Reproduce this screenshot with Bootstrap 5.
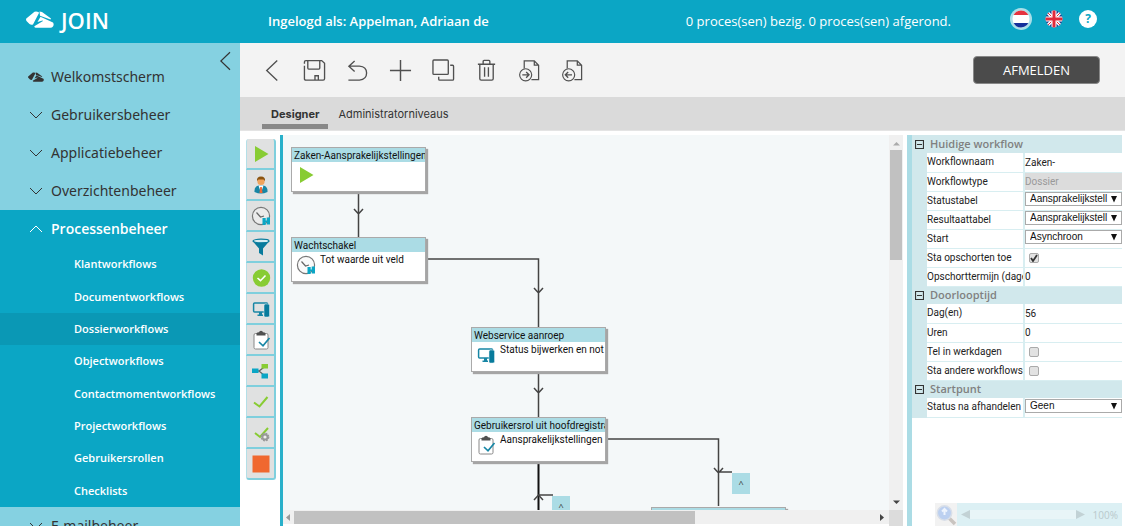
<!DOCTYPE html>
<html lang="nl">
<head>
<meta charset="utf-8">
<meta name="viewport" content="width=device-width, initial-scale=1">
<title>JOIN - Dossierworkflows</title>
<link href="https://cdn.jsdelivr.net/npm/bootstrap@5.3.0/dist/css/bootstrap.min.css" rel="stylesheet">
<style>
  :root { --teal:#0ba6c5; --pale:#85d1e1; --node:#abdce5; --soft:#d1e8ec; }
  body { font-family:"Open Sans","Noto Sans",sans-serif; font-size:13px; line-height:20px; color:#333; background:#fff; }
  a { text-decoration:none; color:inherit; }
  button { border:0; background:none; padding:0; color:inherit; }
  svg { display:block; }
  .topbar { height:43px; background:var(--teal); color:#fff; padding-bottom:2px; }
  .topbar .user { font-weight:600; }
  .brand-area { width:240px; padding-left:26px; padding-bottom:2px; gap:7px; }
  .brand-area span { font-weight:600; font-size:22px; line-height:24px; }
  .side { width:240px; background:var(--pale); padding-top:15px; }
  .collapse-btn { position:absolute; right:5px; top:8px; }
  .side-item { height:38px; padding-left:28px; gap:7px; font-family:"Noto Sans",sans-serif; font-size:14px; color:#333; }
  .side-item svg { width:16px; height:16px; }
  .side-open { background:var(--teal); color:#fff; font-weight:600; font-family:"Open Sans",sans-serif; }
  .side-sub { background:var(--teal); color:#fff; height:259px; font-size:11px; font-weight:600; }
  .side-sub a { padding-left:74px; }
  .side-sub a.current { background:#0a98b5; }
  .tools { height:54px; background:#f3f3f3; padding:0 25px 0 10px; color:#505050; }
  .tools .tool { width:43px; height:43px; }
  .tools .tool svg { width:23px; height:23px; }
  .logout { width:127px; height:28px; background:#4b4b4b; color:#fff; border:1px solid #888; border-radius:4px; font-weight:500; font-size:13px; }
  .tabs { height:34px; background:#dadada; padding-left:22px; font-family:Inter,sans-serif; font-size:11px; font-weight:500; border-bottom:1px solid #e4e4e4; }
  .tabs button { padding:6px 10px 0; border-bottom:5px solid transparent; margin-bottom:1px; }
  .tabs button.on { font-weight:700; border-color:#888; padding:6px 9px 0; }
  .work { padding-top:4px; }
  .palette { width:30px; margin:4px 4px 0 6px; }
  .palette button { height:31px; background:#e0e1e1; border-style:solid; border-width:0 2px 2px 1px; border-color:#b4dfe7 #7fcfdd #7fcfdd #b4dfe7; }
  .palette button:first-child { border-radius:3px 3px 0 0; }
  .palette button:last-child { border-radius:0 0 3px 3px; }
  .flow { border-left:3px solid #29b0ca; }
  .canvas { background:#f4f8f9; overflow:hidden; }
  .node { position:absolute; width:135px; height:45px; background:#fff; border:1px solid #aaa; box-shadow:2px 2px 1px #a5a5a5; overflow:hidden; white-space:nowrap; font-family:Roboto,sans-serif; font-size:10px; color:#111; }
  .node-title { background:var(--node); height:14px; line-height:16px; padding-left:2px; }
  .node-text { line-height:16px; padding-left:4px; }
  .node-icon { margin:3px 0 0 4px; }
  .fold { position:absolute; width:18px; background:var(--node); font-size:9px; line-height:21px; text-align:center; }
  .vbar { width:14px; background:#f0f0f0; padding:6px 0 5px; }
  .vbar i { width:12px; height:110px; background:#c1c1c1; margin-top:4px; }
  .hbar { height:14px; background:#f0f0f0; padding:0 5px 0 3px; margin-bottom:2px; }
  .hbar i { width:67%; height:13px; background:#c1c1c1; margin-left:4px; }
  .corner { width:14px; background:#dcdcdc; }
  .props { width:215px; margin:0 3px 0 4px; border-left:5px solid var(--node); }
  .prop-grid { table-layout:fixed; width:100%; border-collapse:collapse; background:var(--soft); font-family:Roboto,sans-serif; font-size:10px; line-height:16px; color:#222; }
  .prop-grid td, .prop-grid th { padding:0; overflow:hidden; white-space:nowrap; }
  .prop-grid th.group { height:18px; color:#808080; font-family:"Open Sans",sans-serif; font-size:11px; font-weight:600; }
  .prop-grid th.group svg { margin:0 6px 0 3px; }
  .prop-grid th.key { font-weight:400; background:#fff; border-right:2px solid #d8eef1; border-bottom:1px solid #d8eef1; height:19px; }
  .prop-grid td.val { background:#fff; border-bottom:1px solid #d8eef1; }
  .prop-grid input[type=text] { display:block; width:100%; height:17px; border:0; padding:0; background:transparent; color:#222; font-size:10px; }
  .prop-grid input[type=text]:disabled { background:#dcdcdc; color:#999; }
  .pick { position:relative; margin-bottom:3px; }
  .pick select { display:block; width:100%; height:14px; border:1px solid #aaa; border-radius:0; background:#fff; appearance:none; font-family:"Liberation Sans",sans-serif; font-size:10px; line-height:12px; padding:0 12px 0 4px; color:#111; }
  .pick svg { position:absolute; right:4px; top:3px; pointer-events:none; }
  .prop-grid input[type=checkbox] { display:block; appearance:none; width:10px; height:10px; margin-left:4px; border:1px solid #aaa; border-radius:2px; background:#e2e2e2; }
  .prop-grid input[type=checkbox]:checked { background:#e2e2e2 url("data:image/svg+xml,%3Csvg xmlns='http://www.w3.org/2000/svg' viewBox='0 0 8 8'%3E%3Cpath d='M1 4l2 3 4-6' fill='none' stroke='%23333' stroke-width='1.8'/%3E%3C/svg%3E"); }
  .zoombar { height:23px; width:187px; background:#dcf0f4; color:#b9c9cc; font-size:10px; }
  .zoombar .glass { width:22px; background:#f2f2f2; }
  .zoombar .track { height:9px; background:#e8f5f7; }
</style>
</head>
<body>
<svg width="0" height="0" class="position-absolute" aria-hidden="true">
  <defs>
    <symbol id="logo" viewBox="0 0 28 17"><path d="M.300 7.500 8.500.800Q10 0 12.500 1L13 2 7 13.500Q5 14.200 3.500 13L.500 10Q-.300 8.500.300 7.500ZM13.500.500 16 1 25 7.500 24.500 8.500 14 4.800ZM14.500 5.800 16 6.500 27 11.500Q28.300 13.500 27 15.500 26 16.800 24.500 16.800H9.500Q8.300 16.500 8.300 15.200L17 10 16.500 9.500 11.500 11Z" fill="currentColor"/></symbol>
    <symbol id="down" viewBox="0 0 16 16"><path d="M2 5 8 11 14 5" fill="none" stroke="currentColor"/></symbol>
    <symbol id="up" viewBox="0 0 16 16"><path d="M2 11 8 5 14 11" fill="none" stroke="currentColor"/></symbol>
    <symbol id="left" viewBox="0 0 24 24"><path d="M18 1.500 7 12 18 22.500" fill="none" stroke="currentColor" stroke-width="1.400"/></symbol>
    <symbol id="play" viewBox="0 0 20 20"><path d="M4 2 17.500 10 4 18Z" fill="#8c3"/></symbol>
    <symbol id="clock" viewBox="0 0 20 20"><circle cx="10" cy="10" r="8.600" fill="#f6f6f6" fill-opacity=".5" stroke="#777" stroke-width="1.200"/><path d="M5.500 6.500 9.500 11 13 10" fill="none" stroke="#666" stroke-width="1.200"/><path d="M11.500 12h3.200v7h-3.200zM15.700 11.500H19v7h-3.300zM14 14.500h4V16h-4z" fill="#0ba6c5"/></symbol>
    <symbol id="pc" viewBox="0 0 20 20"><rect x="2.600" y="4" width="14" height="9" rx="1" fill="none" stroke="#1786a5" stroke-width="1.500"/><path d="M8 13h3v3H8zM6.500 15.500h5.500V17H6.500z" fill="#1786a5"/><rect x="13" y="5" width="5.500" height="13" rx="1.500" fill="#087b9c" stroke="#e0f0f4" stroke-width=".5"/></symbol>
    <symbol id="clip" viewBox="0 0 20 20"><rect x="3" y="3.500" width="14" height="15.500" rx="1.500" fill="#fff" stroke="#888"/><path d="M5.500 5.500V3.500Q6 2.300 8 2.300 8.300.700 10 .700T12 2.300Q14 2.300 14.500 3.500V5.500Z" fill="#505050"/><path d="M8 12 12 15.800 18.500 8" fill="none" stroke="#1786a5" stroke-width="1.700"/></symbol>
    <symbol id="tri" viewBox="0 0 8 8"><path d="M1 1H7L4 7.500Z" fill="#111"/></symbol>
    <symbol id="minus" viewBox="0 0 9 9"><path d="M.500.500h8v8h-8zM2 4.500h5" fill="none" stroke="#333" stroke-width="1.200"/></symbol>
    <symbol id="page" viewBox="0 0 24 24"><path d="M6.500 10V2H17L21.500 6.500V21.500H14M17 2V6.500H21.500" fill="none" stroke="currentColor" stroke-width="1.300"/><circle cx="8" cy="16.500" r="6.300" fill="#f3f3f3" stroke="currentColor" stroke-width="1.200"/></symbol>
  </defs>
</svg>
<div class="vh-100 d-flex flex-column overflow-hidden">
  <header class="topbar d-flex align-items-center flex-shrink-0">
    <a href="#" class="brand-area d-flex align-items-center"><svg width="28" height="17"><use href="#logo"/></svg><span>JOIN</span></a>
    <div class="user ps-4 ms-1">Ingelogd als: Appelman, Adriaan de</div>
    <div class="ms-auto">0 proces(sen) bezig. 0 proces(sen) afgerond.</div>
    <div class="d-flex align-items-center pb-1" style="padding-left:58px;padding-right:28px">
      <button aria-label="Nederlands"><svg width="24" height="24" viewBox="0 0 24 24"><clipPath id="nl"><circle cx="12" cy="12" r="8.500"/></clipPath><circle cx="12" cy="12" r="11" fill="#a9dfe9"/><g clip-path="url(#nl)"><path fill="#fff" d="M0 0h24v24H0z"/><path fill="#e53440" d="M0 0h24v8H0z"/><path fill="#14309a" d="M0 16h24v8H0z"/></g></svg></button>
      <button class="ms-2 ps-1" aria-label="English"><svg width="18" height="18" viewBox="0 0 18 18"><clipPath id="uk"><circle cx="9" cy="9" r="8.500"/></clipPath><g clip-path="url(#uk)"><path fill="#23408f" d="M0 0h18v18H0z"/><path d="M0 0 18 18M18 0 0 18" stroke="#fff" stroke-width="3.200"/><path d="M0 0 18 18M18 0 0 18" stroke="#e02a3a" stroke-width="1"/><path d="M9 0V18M0 9H18" stroke="#fff" stroke-width="5"/><path d="M9 0V18M0 9H18" stroke="#e02a3a" stroke-width="3"/></g></svg></button>
      <button class="ms-3 rounded-circle bg-white d-flex align-items-center justify-content-center" style="width:18px;height:18px;color:#0ba6c5;font-size:12px;font-weight:700" aria-label="Help">?</button>
    </div>
  </header>
  <div class="d-flex flex-fill" style="min-height:0">
    <nav class="side position-relative flex-shrink-0 overflow-hidden">
      <button class="collapse-btn" aria-label="Menu inklappen"><svg width="20" height="20"><use href="#left"/></svg></button>
      <a href="#" class="side-item d-flex align-items-center"><svg><use href="#logo"/></svg>Welkomstscherm</a>
      <a href="#" class="side-item d-flex align-items-center"><svg><use href="#down"/></svg>Gebruikersbeheer</a>
      <a href="#" class="side-item d-flex align-items-center"><svg><use href="#down"/></svg>Applicatiebeheer</a>
      <a href="#" class="side-item d-flex align-items-center"><svg><use href="#down"/></svg>Overzichtenbeheer</a>
      <a href="#" class="side-item side-open d-flex align-items-center"><svg><use href="#up"/></svg>Processenbeheer</a>
      <div class="side-sub d-flex flex-column">
        <a href="#" class="flex-fill d-flex align-items-center">Klantworkflows</a>
        <a href="#" class="flex-fill d-flex align-items-center">Documentworkflows</a>
        <a href="#" class="flex-fill d-flex align-items-center current">Dossierworkflows</a>
        <a href="#" class="flex-fill d-flex align-items-center">Objectworkflows</a>
        <a href="#" class="flex-fill d-flex align-items-center">Contactmomentworkflows</a>
        <a href="#" class="flex-fill d-flex align-items-center">Projectworkflows</a>
        <a href="#" class="flex-fill d-flex align-items-center">Gebruikersrollen</a>
        <a href="#" class="flex-fill d-flex align-items-center">Checklists</a>
      </div>
      <a href="#" class="side-item d-flex align-items-center"><svg><use href="#down"/></svg>E-mailbeheer</a>
    </nav>
    <main class="flex-fill d-flex flex-column" style="min-width:0">
      <div class="tools d-flex align-items-center flex-shrink-0">
        <button class="tool d-flex align-items-center justify-content-center" aria-label="Terug"><svg><use href="#left"/></svg></button>
        <button class="tool d-flex align-items-center justify-content-center" aria-label="Opslaan"><svg viewBox="0 0 24 24" fill="none" stroke="currentColor" stroke-width="1.400"><path d="M1.500 5V3Q1.500 1.700 3 1.700H19.500L22.500 4.500V20.500Q22.500 22 21 22H3Q1.500 22 1.500 20.500V7M5 2V9.500Q5 10.500 6 10.500H16.500Q17.500 10.500 17.500 9.500V2M12.500 22V17.500H16V22"/></svg></button>
        <button class="tool d-flex align-items-center justify-content-center" aria-label="Ongedaan maken"><svg viewBox="0 0 24 24" fill="none" stroke="currentColor" stroke-width="1.400"><path d="M9 2 3 7.500 9 13M3 7.500H14Q21.500 8 21.500 14.700T14 22H2.500"/></svg></button>
        <button class="tool d-flex align-items-center justify-content-center" aria-label="Toevoegen"><svg viewBox="0 0 24 24" stroke="currentColor" stroke-width="1.500"><path d="M12 1V23M1 12H23"/></svg></button>
        <button class="tool d-flex align-items-center justify-content-center" aria-label="Kopiëren"><svg viewBox="0 0 24 24" fill="none" stroke="currentColor" stroke-width="1.400"><rect x="1" y="1" width="16" height="15" rx="1"/><path d="M19 6.500H21.500Q22.500 6.500 22.500 7.500V21Q22.500 22 21.500 22H8Q7 22 7 21V18.500"/></svg></button>
        <button class="tool d-flex align-items-center justify-content-center" aria-label="Verwijderen"><svg viewBox="0 0 24 24" fill="none" stroke="currentColor" stroke-width="1.400"><path d="M3 5.500H21M5 6V20.500Q5 22 6.500 22H17.500Q19 22 19 20.500V6M8.500 5V2.500Q8.500 1.500 9.500 1.500H14.500Q15.500 1.500 15.500 2.500V5M10 8.500V18.500M14 8.500V18.500"/></svg></button>
        <button class="tool d-flex align-items-center justify-content-center" aria-label="Exporteren"><svg viewBox="0 0 24 24"><use href="#page"/><path d="M4.500 16.500H11.500M8.500 13.500 11.500 16.500 8.500 19.500" fill="none" stroke="currentColor" stroke-width="1.400"/></svg></button>
        <button class="tool d-flex align-items-center justify-content-center" aria-label="Importeren"><svg viewBox="0 0 24 24"><use href="#page"/><path d="M11.500 16.500H4.500M7.500 13.500 4.500 16.500 7.500 19.500" fill="none" stroke="currentColor" stroke-width="1.400"/></svg></button>
        <button class="logout ms-auto">AFMELDEN</button>
      </div>
      <div class="tabs d-flex flex-shrink-0"><button class="on">Designer</button><button>Administratorniveaus</button></div>
      <div class="work d-flex flex-fill" style="min-height:0">
        <div class="palette d-flex flex-column flex-shrink-0">
          <button class="d-flex align-items-center justify-content-center" aria-label="Start"><svg width="20" height="20"><use href="#play"/></svg></button>
          <button class="d-flex align-items-center justify-content-center" aria-label="Gebruiker"><svg width="20" height="20" viewBox="0 0 20 20"><path d="M3.500 17Q3 11.500 7.500 10.500H12.500Q17 11.500 16.500 17 10 20 3.500 17Z" fill="#1786a5"/><path d="M7.500 10.500 10 18 12.500 10.500Z" fill="#fff"/><path d="M9.200 12H10.800L11.500 18H8.500Z" fill="#f06a38"/><circle cx="10" cy="6.500" r="3.600" fill="#f0a35c"/><path d="M6 6Q5.500 1.500 10 1.500T14 6L12.500 4.500H7.500Z" fill="#8b5410"/></svg></button>
          <button class="d-flex align-items-center justify-content-center" aria-label="Wachten"><svg width="20" height="20"><use href="#clock"/></svg></button>
          <button class="d-flex align-items-center justify-content-center" aria-label="Filter"><svg width="20" height="20" viewBox="0 0 20 20"><path d="M1.500 4 8 11.500V16L12 18.500V11.500L18.500 4Z" fill="#087b9c"/><ellipse cx="10" cy="4" rx="8" ry="1.800" fill="#d5edf2" stroke="#087b9c" stroke-width="1.200"/></svg></button>
          <button class="d-flex align-items-center justify-content-center" aria-label="Akkoord"><svg width="20" height="20" viewBox="0 0 20 20"><circle cx="10.500" cy="10" r="8.700" fill="#8c3"/><path d="M6.500 10 9.500 12.700 14.500 7.500" fill="none" stroke="#fff" stroke-width="1.600"/></svg></button>
          <button class="d-flex align-items-center justify-content-center" aria-label="Webservice"><svg width="20" height="20"><use href="#pc"/></svg></button>
          <button class="d-flex align-items-center justify-content-center" aria-label="Taak"><svg width="20" height="20"><use href="#clip"/></svg></button>
          <button class="d-flex align-items-center justify-content-center" aria-label="Splitsing"><svg width="20" height="20" viewBox="0 0 20 20"><path d="M5 10H8L14 5.500M8 10 14 15" fill="none" stroke="#666" stroke-width="1.300"/><path d="M1 7.500h6.500v4.500H1zM10.500 12.500H17v5h-6.500z" fill="#0ba6c5"/><path d="M10.500 3H17v4.500h-6.500z" fill="#8c3"/></svg></button>
          <button class="d-flex align-items-center justify-content-center" aria-label="Controle"><svg width="20" height="20" viewBox="0 0 20 20"><path d="M3 10.500 8.500 14.500 16.500 5" fill="none" stroke="#8c3" stroke-width="2"/></svg></button>
          <button class="d-flex align-items-center justify-content-center" aria-label="Automatische controle"><svg width="20" height="20" viewBox="0 0 20 20"><path d="M4 10 9 14 17 5" fill="none" stroke="#8c3" stroke-width="2"/><circle cx="14" cy="14" r="3.500" fill="#999" stroke="#999" stroke-width="1.800" stroke-dasharray="1.750 1"/><circle cx="14" cy="14" r="1.600" fill="#eee"/></svg></button>
          <button class="d-flex align-items-center justify-content-center" aria-label="Stop"><svg width="20" height="20" viewBox="0 0 20 20"><path d="M1.500 1.500h17v17h-17z" fill="#f0682f"/></svg></button>
        </div>
        <section class="flow flex-fill d-flex flex-column" style="min-width:0">
          <div class="d-flex flex-fill" style="min-height:0">
            <div class="canvas position-relative flex-fill">
              <svg class="position-absolute top-0 start-0" width="606" height="375" fill="none" stroke="#444" stroke-width="1.500">
                <path d="M75.500 58V102M71 74 75.500 79 80 74M145 124H255.500V192M251 153 255.500 158 260 153M255.500 238V282M251 253 255.500 258 260 253M323 304H435.500V371M431 333 435.500 338 440 333M435.500 337H449"/>
                <path d="M255.500 328V375" stroke="#111" stroke-width="2"/><path d="M251 365 255.500 360 260 365M255.500 360H270"/>
              </svg>
              <div class="node" style="left:8px;top:12px"><div class="node-title">Zaken-Aansprakelijkstellingen</div><div class="d-flex"><svg class="node-icon" width="20" height="20"><use href="#play"/></svg></div></div>
              <div class="node" style="left:8px;top:102px"><div class="node-title">Wachtschakel</div><div class="d-flex"><svg class="node-icon" width="20" height="20"><use href="#clock"/></svg><div class="node-text">Tot waarde uit veld</div></div></div>
              <div class="node" style="left:188px;top:192px"><div class="node-title">Webservice aanroep</div><div class="d-flex"><svg class="node-icon flex-shrink-0" width="20" height="20"><use href="#pc"/></svg><div class="node-text">Status bijwerken en not</div></div></div>
              <div class="node" style="left:188px;top:282px"><div class="node-title">Gebruikersrol uit hoofdregistra</div><div class="d-flex"><svg class="node-icon flex-shrink-0" width="20" height="20"><use href="#clip"/></svg><div class="node-text">Aansprakelijkstellingen c</div></div></div>
              <div class="node" style="left:368px;top:372px"><div class="node-title"></div></div>
              <div class="fold" style="left:449px;top:338px">^</div>
              <div class="fold" style="left:269px;top:361px">^</div>
            </div>
            <div class="vbar d-flex flex-column align-items-center flex-shrink-0"><svg width="7" height="5"><path d="M0 4.500 3.500 1 7 4.500Z" fill="#aaa"/></svg><i></i><svg class="mt-auto" width="7" height="5"><path d="M0 .500H7L3.500 4Z" fill="#444"/></svg></div>
          </div>
          <div class="d-flex flex-shrink-0">
            <div class="hbar flex-fill d-flex align-items-center"><svg width="4" height="7"><path d="M4 0V7L0 3.500Z" fill="#999"/></svg><i></i><svg class="ms-auto" width="4" height="7"><path d="M0 0V7L4 3.500Z" fill="#444"/></svg></div>
            <div class="corner"></div>
          </div>
        </section>
        <aside class="props flex-shrink-0 d-flex flex-column">
          <table class="prop-grid">
            <colgroup><col style="width:15px"><col style="width:97px"><col></colgroup>
            <tbody>
            <tr><th class="group" colspan="3"><div class="d-flex align-items-center"><svg width="9" height="9"><use href="#minus"/></svg>Huidige workflow</div></th></tr>
            <tr><td></td><th class="key"><label for="p1">Workflownaam</label></th><td class="val"><input id="p1" type="text" value="Zaken-"></td></tr>
            <tr><td></td><th class="key"><label for="p2">Workflowtype</label></th><td class="val"><input id="p2" type="text" value="Dossier" disabled></td></tr>
            <tr><td></td><th class="key"><label for="p3">Statustabel</label></th><td class="val"><div class="pick"><select id="p3"><option>Aansprakelijkstell</option></select><svg width="8" height="8"><use href="#tri"/></svg></div></td></tr>
            <tr><td></td><th class="key"><label for="p4">Resultaattabel</label></th><td class="val"><div class="pick"><select id="p4"><option>Aansprakelijkstell</option></select><svg width="8" height="8"><use href="#tri"/></svg></div></td></tr>
            <tr><td></td><th class="key"><label for="p5">Start</label></th><td class="val"><div class="pick"><select id="p5"><option>Asynchroon</option></select><svg width="8" height="8"><use href="#tri"/></svg></div></td></tr>
            <tr><td></td><th class="key"><label for="p6">Sta opschorten toe</label></th><td class="val"><input id="p6" type="checkbox" checked></td></tr>
            <tr><td></td><th class="key"><label for="p7">Opschorttermijn (dage</label></th><td class="val"><input id="p7" type="text" value="0"></td></tr>
            <tr><th class="group" colspan="3"><div class="d-flex align-items-center"><svg width="9" height="9"><use href="#minus"/></svg>Doorlooptijd</div></th></tr>
            <tr><td></td><th class="key"><label for="p8">Dag(en)</label></th><td class="val"><input id="p8" type="text" value="56"></td></tr>
            <tr><td></td><th class="key"><label for="p9">Uren</label></th><td class="val"><input id="p9" type="text" value="0"></td></tr>
            <tr><td></td><th class="key"><label for="p10">Tel in werkdagen</label></th><td class="val"><input id="p10" type="checkbox"></td></tr>
            <tr><td></td><th class="key"><label for="p11">Sta andere workflows</label></th><td class="val"><input id="p11" type="checkbox"></td></tr>
            <tr><th class="group" colspan="3"><div class="d-flex align-items-center"><svg width="9" height="9"><use href="#minus"/></svg>Startpunt</div></th></tr>
            <tr><td></td><th class="key"><label for="p12">Status na afhandelen</label></th><td class="val"><div class="pick"><select id="p12"><option>Geen</option></select><svg width="8" height="8"><use href="#tri"/></svg></div></td></tr>
            </tbody>
          </table>
          <div class="zoombar mt-auto ms-auto d-flex align-items-center">
            <div class="glass h-100"><svg width="22" height="23" viewBox="0 0 22 23"><path d="M14 15 20 21" stroke="#c9c4c0" stroke-width="3.500"/><circle cx="9.500" cy="10" r="7.200" fill="#bcd0f0" stroke="#d9dfe8" stroke-width="1.500"/><path d="M9.500 6V12M7 8.500 9.500 6 12 8.500" fill="none" stroke="#eef4fd" stroke-width="2"/></svg></div>
            <svg class="ms-1" width="9" height="9"><path d="M9 0V9L0 4.500Z" fill="#c2d2d5"/></svg>
            <div class="track flex-fill"></div>
            <svg width="9" height="9"><path d="M0 0V9L9 4.500Z" fill="#c2d2d5"/></svg>
            <span class="ps-2 pe-1">100%</span>
          </div>
        </aside>
      </div>
    </main>
  </div>
</div>
<script src="https://cdn.jsdelivr.net/npm/bootstrap@5.3.0/dist/js/bootstrap.bundle.min.js"></script>
</body>
</html>
